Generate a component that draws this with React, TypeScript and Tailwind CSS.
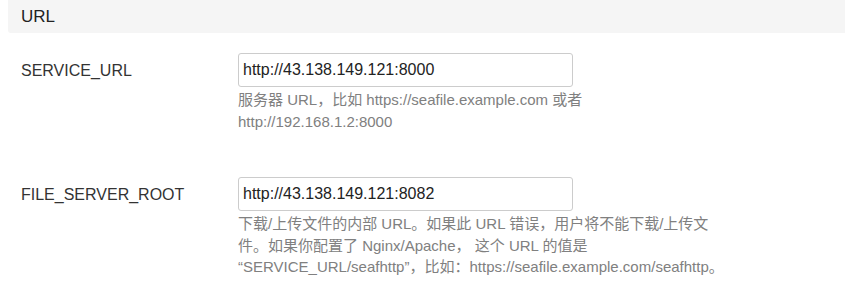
import React from 'react';

interface Setting {
  key: string;
  value: string;
  help: string;
}

const settings: Setting[] = [
  {
    key: 'SERVICE_URL',
    value: 'http://43.138.149.121:8000',
    help: '服务器 URL，比如 https://seafile.example.com 或者 http://192.168.1.2:8000',
  },
  {
    key: 'FILE_SERVER_ROOT',
    value: 'http://43.138.149.121:8082',
    help: '下载/上传文件的内部 URL。如果此 URL 错误，用户将不能下载/上传文件。如果你配置了 Nginx/Apache， 这个 URL 的值是 “SERVICE_URL/seafhttp”，比如：https://seafile.example.com/seafhttp。',
  },
];

const App: React.FC = () => {
  return (
    <div className="w-[845px] h-[306px] bg-white overflow-hidden font-[Liberation_Sans,'Noto_Sans_CJK_SC',sans-serif]">
      {/* Section header */}
      <div className="ml-2 h-[33px] bg-[#f5f5f5] rounded-bl-[3px] pl-[13px] flex items-center">
        <h3 className="text-[17px] text-[#222] pt-[1px]">URL</h3>
      </div>

      <div className="pl-[21px] pt-[20px] flex flex-col gap-[45px]">
        {settings.map(s => (
          <div key={s.key} className="flex">
            <div className="w-[217px] h-[35px] flex items-center text-[16px] text-[#333]">{s.key}</div>
            <div className="flex flex-col">
              <input
                readOnly
                value={s.value}
                className="w-[335px] h-[34px] border border-[#ccc] rounded-[3px] px-[4px] text-[16px] text-[#222] outline-none"
              />
              <p className="w-[492px] mt-[2px] text-[15px] leading-[21.5px] text-[#808080]">{s.help}</p>
            </div>
          </div>
        ))}
      </div>
    </div>
  );
};

export default App;
